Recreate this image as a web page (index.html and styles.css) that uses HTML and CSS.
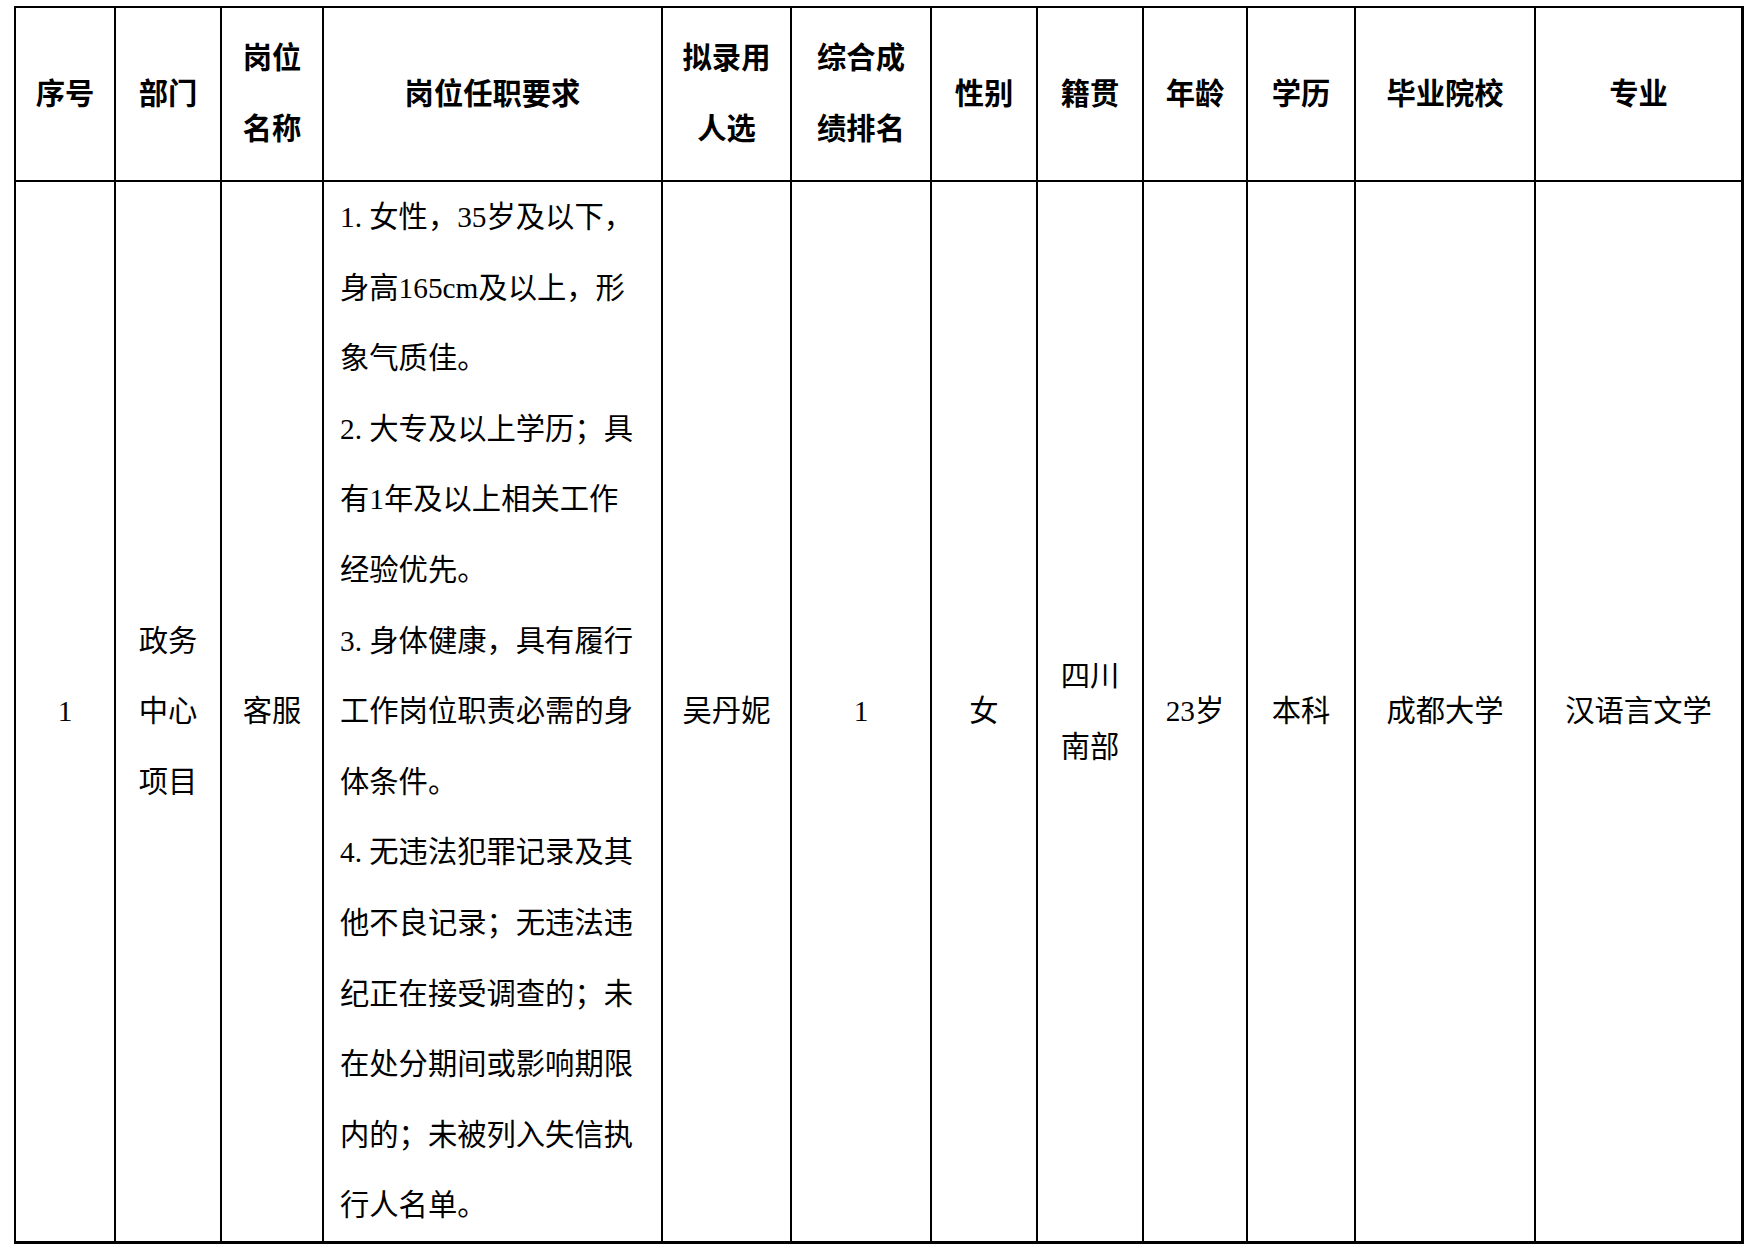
FILE: index.html
```html
<!DOCTYPE html>
<html lang="zh-CN">
<head>
<meta charset="utf-8">
<title>拟录用人员公示</title>
<link rel="stylesheet" href="styles.css">
</head>
<body>
<div class="sheet" role="table">
  <div class="cell head" role="columnheader">序号</div>
  <div class="cell head" role="columnheader">部门</div>
  <div class="cell head" role="columnheader">岗位<br>名称</div>
  <div class="cell head" role="columnheader">岗位任职要求</div>
  <div class="cell head" role="columnheader">拟录用<br>人选</div>
  <div class="cell head" role="columnheader">综合成<br>绩排名</div>
  <div class="cell head" role="columnheader">性别</div>
  <div class="cell head" role="columnheader">籍贯</div>
  <div class="cell head" role="columnheader">年龄</div>
  <div class="cell head" role="columnheader">学历</div>
  <div class="cell head" role="columnheader">毕业院校</div>
  <div class="cell head last" role="columnheader">专业</div>

  <div class="cell body" role="cell">1</div>
  <div class="cell body" role="cell">政务<br>中心<br>项目</div>
  <div class="cell body" role="cell">客服</div>
  <div class="cell body req" role="cell">
    <p class="req-text"><span class="idx">1.</span>女性，35岁及以下，<br>身高165cm及以上，形<br>象气质佳。<br><span class="idx">2.</span>大专及以上学历；具<br>有1年及以上相关工作<br>经验优先。<br><span class="idx">3.</span>身体健康，具有履行<br>工作岗位职责必需的身<br>体条件。<br><span class="idx">4.</span>无违法犯罪记录及其<br>他不良记录；无违法违<br>纪正在接受调查的；未<br>在处分期间或影响期限<br>内的；未被列入失信执<br>行人名单。</p>
  </div>
  <div class="cell body" role="cell">吴丹妮</div>
  <div class="cell body" role="cell">1</div>
  <div class="cell body" role="cell">女</div>
  <div class="cell body" role="cell">四川<br>南部</div>
  <div class="cell body" role="cell">23岁</div>
  <div class="cell body" role="cell">本科</div>
  <div class="cell body" role="cell">成都大学</div>
  <div class="cell body last" role="cell">汉语言文学</div>
</div>
</body>
</html>
```

FILE: styles.css
```css
html, body {
  margin: 0;
  padding: 0;
  background: #ffffff;
}

body {
  font-family: "Liberation Serif", "Noto Sans CJK SC", serif;
  font-size: 29.3px;
  color: #000000;
}

.sheet {
  display: grid;
  width: max-content;
  grid-template-columns: 100px 106px 102px 339px 129px 140px 106px 106px 104px 108px 180px 208px;
  grid-template-rows: 174px 1062px;
  margin: 6px 0 0 14px;
  border-top: 2px solid #000;
  border-left: 2px solid #000;
}

.cell {
  box-sizing: border-box;
  display: flex;
  align-items: center;
  justify-content: center;
  text-align: center;
  border-right: 2px solid #000;
  border-bottom: 2px solid #000;
  line-height: 70.6px;
  white-space: nowrap;
}

.cell.last {
  border-right-width: 3px;
}

.head {
  font-weight: 700;
}

.body {
  border-bottom-width: 3px;
}

.req {
  justify-content: flex-start;
  text-align: left;
  padding-left: 16px;
}

.req-text {
  margin: 0;
}

.idx {
  margin-right: 0.25em;
}
```
